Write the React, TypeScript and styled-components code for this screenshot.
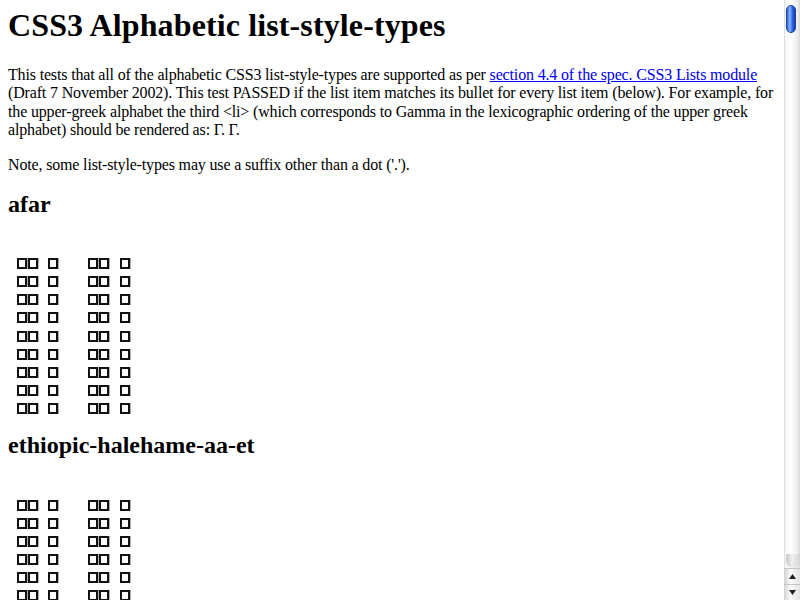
import * as React from 'react';
import styled, { createGlobalStyle } from 'styled-components';

const GlobalStyle = createGlobalStyle`
  html, body {
    margin: 0;
    padding: 0;
    background: #ffffff;
  }
  body {
    font-family: "Liberation Serif", "Times New Roman", serif;
    font-size: 16px;
    color: #000000;
  }
`;

const Window = styled.div`
  display: flex;
  width: 800px;
  height: 600px;
  overflow: hidden;
`;

const Page = styled.main`
  flex: 1;
  min-width: 0;
  height: 600px;
  overflow: hidden;
  padding: 8px 8px 0 8px;
  box-sizing: border-box;
`;

const Title = styled.h1`
  font-size: 32px;
  font-weight: bold;
  line-height: 37px;
  letter-spacing: 0.12px;
  margin: -1px 0 22px 0;
`;

const Text = styled.p`
  margin: 0 0 16px 0;
  line-height: 18.4px;
  letter-spacing: -0.16px;
`;

const Link = styled.a`
  color: #0000ee;
  text-decoration: underline;
`;

const SectionTitle = styled.h2<{ $gap: number }>`
  font-size: 24px;
  font-weight: bold;
  line-height: 27.6px;
  margin: ${p => p.$gap}px 0 0 0;
`;

const List = styled.ol`
  list-style: none;
  margin: 36px 0 0 0;
  padding: 0 0 0 9px;
`;

const Item = styled.li`
  display: grid;
  grid-template-columns: 71px auto;
  height: 18.1px;
  align-items: center;
`;

const Glyphs = styled.span`
  display: flex;
  align-items: center;
`;

const Tofu = styled.span<{ $space?: number }>`
  display: inline-block;
  width: 10px;
  height: 11px;
  box-sizing: border-box;
  border: 2px solid #111111;
  box-shadow: 1px 0 0 #b0b0b0;
  margin-left: ${p => p.$space ?? 0}px;
`;

const Scrollbar = styled.aside`
  width: 16px;
  height: 600px;
  display: flex;
  flex-direction: column;
  background: linear-gradient(to right, #c9c9c9 0, #f4f4f4 1px, #ffffff 40%, #ececec 85%, #d6d6d6 100%);
`;

const Track = styled.div`
  flex: 1;
  display: flex;
  flex-direction: column;
  padding: 5px 0 0 2px;
`;

const Thumb = styled.div`
  width: 10px;
  height: 28px;
  border-radius: 5px;
  border: 1px solid #1c3f9a;
  box-sizing: border-box;
  background: linear-gradient(to right, #2f5fd6 0%, #86b8ff 35%, #2a5fe6 70%, #173fae 100%);
`;

const TrackEnd = styled.div`
  height: 14px;
  margin-top: auto;
  border-radius: 0 0 8px 8px;
  background: linear-gradient(to right, #c8c8c8, #efefef 45%, #d4d4d4);
`;

const ArrowButton = styled.div`
  height: 16px;
  display: flex;
  align-items: center;
  justify-content: center;
  border-top: 1px solid #c4c4c4;
  box-sizing: border-box;
  background: linear-gradient(to right, #d0d0d0, #fafafa 40%, #e4e4e4);
`;

const Tri = ({ up }: { up?: boolean }) => (
  <svg width="7" height="5" viewBox="0 0 7 5">
    <path d={up ? 'M3.5 0 L7 5 L0 5 Z' : 'M0 0 L7 0 L3.5 5 Z'} fill="#222" />
  </svg>
);

const Row = () => (
  <Item>
    <Glyphs>
      <Tofu />
      <Tofu $space={1} />
      <Tofu $space={10} />
    </Glyphs>
    <Glyphs>
      <Tofu />
      <Tofu $space={1} />
      <Tofu $space={11} />
    </Glyphs>
  </Item>
);

const rows = Array.from({ length: 9 }, (_, i) => i);

export default function App() {
  return (
    <>
      <GlobalStyle />
      <Window>
        <Page>
          <Title>CSS3 Alphabetic list-style-types</Title>
          <Text>
            This tests that all of the alphabetic CSS3 list-style-types are supported as per{' '}
            <Link href="#">section 4.4 of the spec. CSS3 Lists module</Link> (Draft 7 November
            2002). This test PASSED if the list item matches its bullet for every list item
            (below). For example, for the upper-greek alphabet the third &lt;li&gt; (which
            corresponds to Gamma in the lexicographic ordering of the upper greek alphabet) should
            be rendered as: Γ. Γ.
          </Text>
          <Text>Note, some list-style-types may use a suffix other than a dot ('.').</Text>

          <SectionTitle $gap={17}>afar</SectionTitle>
          <List>
            {rows.map(i => <Row key={i} />)}
          </List>

          <SectionTitle $gap={15}>ethiopic-halehame-aa-et</SectionTitle>
          <List>
            {rows.map(i => <Row key={i} />)}
          </List>
        </Page>
        <Scrollbar>
          <Track>
            <Thumb />
            <TrackEnd />
          </Track>
          <ArrowButton>
            <Tri up />
          </ArrowButton>
          <ArrowButton>
            <Tri />
          </ArrowButton>
        </Scrollbar>
      </Window>
    </>
  );
}
